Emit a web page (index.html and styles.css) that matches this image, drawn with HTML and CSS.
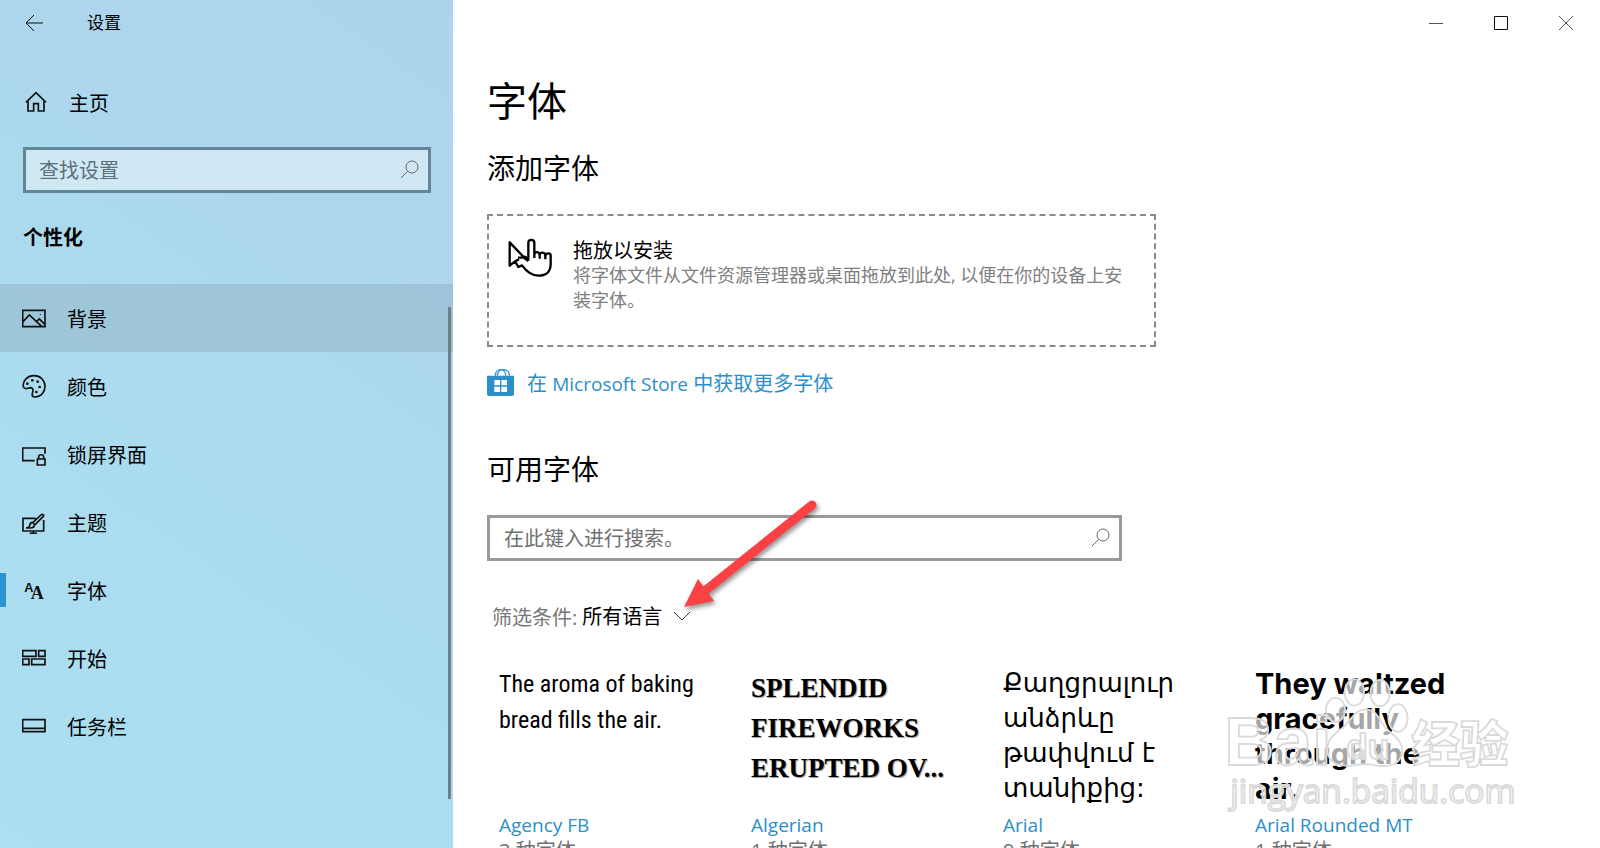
FILE: index.html
```html
<!DOCTYPE html>
<html lang="zh-CN">
<head>
<meta charset="utf-8">
<title>设置</title>
<link rel="stylesheet" href="styles.css">
</head>
<body>
<div class="window">
  <aside class="sidebar">
    <header class="titlebar">
      <button class="back" aria-label="返回">
        <svg width="18" height="18" viewBox="0 0 18 18"><path d="M9 1L1 9l8 8M1 9h17"/></svg>
      </button>
      <span class="app-name">设置</span>
    </header>
    <a class="home" href="#">
      <svg class="icon" viewBox="72 272 72 72"><path d="M78 309L108 280l30 29M84 304v31h17v-22h14v22h17v-31"/></svg>
      <span>主页</span>
    </a>
    <div class="search search-side">
      <input type="text" placeholder="查找设置" aria-label="查找设置">
      <svg class="glass" viewBox="0 0 20 20"><circle cx="12" cy="7" r="6"/><path d="M7.600 11.400L1 18"/></svg>
    </div>
    <h2 class="section">个性化</h2>
    <nav class="nav">
      <a class="item hover" href="#">
        <svg class="icon" viewBox="66 108 72 72"><path d="M68 121h67v49H68zM69 155l19-20 37 34M109 155l9-8 17 17"/><circle class="dot" cx="121" cy="133" r="2"/></svg>
        <span>背景</span>
      </a>
      <a class="item" href="#">
        <svg class="icon" viewBox="66 312 72 72"><path d="M70 350c-3-19 13-33 32-33 19 0 33 14 33 32 0 17-12 32-29 32-12 0-10-7-8-14 2-8 1-14-7-14-8 1-17 8-21-3z"/><g class="dot"><circle cx="82" cy="341" r="4"/><circle cx="97" cy="331" r="4"/><circle cx="113" cy="335" r="4"/><circle cx="119" cy="351" r="4"/><circle cx="109" cy="366" r="4"/></g></svg>
        <span>颜色</span>
      </a>
      <a class="item" href="#">
        <svg class="icon" viewBox="66 516 72 72"><path d="M104 572H68v-38h67v17M112 567h23v18h-23zM116 567v-6c0-9 15-9 15 0v6"/></svg>
        <span>锁屏界面</span>
      </a>
      <a class="item" href="#">
        <svg class="icon" viewBox="66 30 72 72"><path d="M107 55H69v38h62V60M100 93v7M89 100h22M78 84h12c8 0 13-3 13-8l27-27c3-4-2-8-6-5L99 67c-7-1-9 3-10 10-1 5-5 7-11 7zM98 67l7 8"/></svg>
        <span>主题</span>
      </a>
      <a class="item current" href="#" aria-current="page">
        <svg class="icon" viewBox="66 234 72 72"><text class="a-sans" x="73" y="275">A</text><text class="a-serif" x="92" y="297">A</text></svg>
        <span>字体</span>
      </a>
      <a class="item" href="#">
        <svg class="icon" viewBox="66 438 72 72"><path d="M68 452h40v17H68zM116 452h19v17h-19zM68 477h19v17H68zM95 477h40v17H95z"/></svg>
        <span>开始</span>
      </a>
      <a class="item" href="#">
        <svg class="icon" viewBox="66 642 72 72"><path d="M68 659h67v36H68zM68 685h67"/></svg>
        <span>任务栏</span>
      </a>
      <div class="scrollbar"></div>
    </nav>
  </aside>

  <main class="main">
    <div class="controls">
      <button aria-label="最小化"><svg width="14" height="14" viewBox="0 0 14 14"><path d="M0 7.500h14"/></svg></button>
      <button class="max" aria-label="最大化"><svg width="14" height="14" viewBox="0 0 14 14"><path d="M.5.5h13v13H.5z"/></svg></button>
      <button aria-label="关闭"><svg width="14" height="14" viewBox="0 0 14 14"><path d="M0 0l14 14M14 0L0 14"/></svg></button>
    </div>
    <div class="content">
      <h1>字体</h1>
      <h2 class="add-title">添加字体</h2>
      <section class="drop">
        <svg class="drop-icon" viewBox="112 532 138 120"><path d="M163 590L120 545v70l16-13 10 17 11-5c16 22 33 31 50 31 23 0 36-13 36-35v-25c0-9-14-9-16 0 0-11-16-13-17-1 0-12-15-13-16-2v-36c0-11-18-11-18 0v51c-5-9-14-12-18-4M137 602l11-6M227 585v11M210 584v10M194 580v12M145 591h17l14 10" /></svg>
        <div class="drop-text">
          <div class="drop-head">拖放以安装</div>
          <p>将字体文件从文件资源管理器或桌面拖放到此处, 以便在你的设备上安装字体。</p>
        </div>
      </section>
      <a class="store" href="#">
        <svg viewBox="51 924 81 81"><path class="bag" d="M51 944h81v55q0 6-6 6H57q-6 0-6-6z"/><path class="handle" d="M76 944c0-24 31-24 31 0M82 944c2-26 37-22 36 0"/><path class="panes" d="M73 957h17v16H73zM94 957h17v16H94zM73 977h17v16H73zM94 977h17v16H94z"/></svg>
        <span>在 <span class="latin">Microsoft Store</span> 中获取更多字体</span>
      </a>
      <h2 class="avail-title">可用字体</h2>
      <div class="search search-main">
        <input type="text" placeholder="在此键入进行搜索。" aria-label="搜索字体">
        <svg class="glass" viewBox="0 0 20 20"><circle cx="12" cy="7" r="6"/><path d="M7.600 11.400L1 18"/></svg>
      </div>
      <div class="filter">
        <label for="lang">筛选条件:</label>
        <select id="lang"><option>所有语言</option></select>
        <svg width="18" height="10" viewBox="0 0 18 10"><path d="M1 1l8 8 8-8"/></svg>
      </div>
      <div class="fonts">
        <article class="font">
          <div class="preview agency">The aroma of baking<br>bread fills the air.</div>
          <a class="latin" href="#">Agency FB</a>
          <div class="count">3 种字体</div>
        </article>
        <article class="font">
          <div class="preview algerian">SPLENDID<br>FIREWORKS<br>ERUPTED OV...</div>
          <a class="latin" href="#">Algerian</a>
          <div class="count">1 种字体</div>
        </article>
        <article class="font">
          <div class="preview arial">Քաղցրալուր<br>անձրևը<br>թափվում է<br>տանիքից:</div>
          <a class="latin" href="#">Arial</a>
          <div class="count">9 种字体</div>
        </article>
        <article class="font">
          <div class="preview rounded">They waltzed<br>gracefully<br>through the<br>air.</div>
          <a class="latin" href="#">Arial Rounded MT</a>
          <div class="count">1 种字体</div>
        </article>
      </div>
    </div>
  </main>

  <svg class="arrow" viewBox="676 492 150 125"><path class="shaft" d="M812 505L706 590"/><path class="head" d="M684 607L698 579 714 601z"/></svg>

  <svg class="watermark" viewBox="690 70 810 392">
    <g>
      <ellipse cx="1050" cy="124" rx="27" ry="37"/>
      <ellipse cx="1122" cy="126" rx="27" ry="37"/>
      <ellipse cx="997" cy="173" rx="27" ry="34"/>
      <ellipse cx="1172" cy="196" rx="27" ry="39"/>
      <path d="M1082 172c-34 0-42 34-66 52-24 17-46 36-42 67 6 39 46 43 84 36 20-4 34-2 52 2 40 7 70-4 74-38 2-34-28-47-50-71-14-19-22-48-52-48z"/>
    </g>
    <text class="wm-logo" x="686" y="328">Bai</text>
    <text class="wm-du" x="1026" y="312">du</text>
    <text class="wm-cn" x="1210" y="318">经验</text>
    <text class="wm-url" x="702" y="434">jingyan.baidu.com</text>
  </svg>
</div>
</body>
</html>
```
FILE: styles.css
```css
* { box-sizing: border-box; }

body {
  margin: 0;
  font-family: "Open Sans", "Noto Sans CJK SC", sans-serif;
  font-size: 20px;
  color: #000;
  background: #fff;
}

h1, h2, p { margin: 0; font-weight: 400; }
a { color: inherit; text-decoration: none; }
button { border: 0; padding: 0; background: none; }
svg { display: block; fill: none; stroke: #111; }
.latin { font-size: 19px; }

.window {
  position: relative;
  display: flex;
  height: 100vh;
  overflow: hidden;
}

/* Sidebar */
.sidebar {
  flex: 0 0 453px;
  display: flex;
  flex-direction: column;
  background: linear-gradient(215deg, #add4ed 0%, #add5ed 22%, #abdaee 45%, #acdff1 100%);
}
.titlebar {
  display: flex;
  align-items: center;
  gap: 44px;
  height: 46px;
  padding-left: 25px;
}
.app-name { font-size: 17px; line-height: 24px; }
.home {
  display: flex;
  align-items: center;
  gap: 21px;
  height: 40px;
  margin-top: 36px;
  padding-left: 24px;
}
.icon {
  width: 24px;
  height: 24px;
  stroke-width: 5;
}
.icon .dot { fill: #111; stroke: none; }
.icon text { fill: #111; stroke: none; }
.a-sans { font: 700 38px "Liberation Sans", sans-serif; }
.a-serif { font: 700 54px "Liberation Serif", serif; }

.search {
  display: flex;
  align-items: center;
  height: 46px;
  border: 3px solid #999;
}
.search input {
  flex: 1;
  min-width: 0;
  height: 40px;
  padding: 0 0 0 14px;
  border: 0;
  outline: 0;
  background: none;
  font: inherit;
}
.search input::placeholder { color: #707070; opacity: 1; }
.glass {
  width: 20px;
  height: 20px;
  margin-right: 8px;
  stroke: #666;
}
.search-side {
  margin: 25px 22px 0 23px;
  border-color: #648595;
  background: rgba(255, 255, 255, 0.42);
}
.search-side input { padding-left: 13px; }
.search-side input::placeholder { color: #5d717c; }

.section {
  margin: 31px 0 0 23px;
  font-size: 20px;
  font-weight: 700;
  line-height: 28px;
}
.nav {
  position: relative;
  flex: 1;
  margin-top: 32px;
}
.item {
  position: relative;
  display: flex;
  align-items: center;
  gap: 21px;
  height: 68px;
  padding-left: 22px;
}
.item.hover { background: rgba(130, 155, 170, 0.32); }
.item.current::before {
  content: "";
  position: absolute;
  left: 0;
  top: 17px;
  width: 6px;
  height: 34px;
  background: #2b93cf;
}
.scrollbar {
  position: absolute;
  top: 23px;
  right: 2px;
  width: 3px;
  height: 492px;
  background: #6f7f86;
}

/* Main pane */
.main {
  flex: 1;
  min-width: 0;
  display: flex;
  flex-direction: column;
}
.controls {
  flex: none;
  display: flex;
  justify-content: flex-end;
  height: 46px;
  padding-right: 2px;
}
.controls button {
  display: flex;
  align-items: center;
  justify-content: center;
  width: 65px;
}
.controls svg { stroke: #555; }
.controls .max svg { stroke: #111; }

.content { padding: 29px 34px 0; }
h1 { font-size: 40px; line-height: 52px; }
.add-title, .avail-title { font-size: 28px; line-height: 36px; }
.add-title { margin-top: 23px; }
.avail-title { margin-top: 54px; }

.drop {
  display: flex;
  gap: 20px;
  max-width: 669px;
  min-height: 133px;
  margin-top: 28px;
  padding: 22px 18px;
  border: 2px dashed #8a8a8a;
}
.drop-icon {
  flex: none;
  width: 46px;
  height: 40px;
  stroke: #000;
  stroke-width: 7;
  stroke-linejoin: round;
}
.drop-head { line-height: 25px; }
.drop-text p {
  font-size: 18px;
  line-height: 25px;
  color: #808080;
}

.store {
  display: flex;
  align-items: center;
  gap: 13px;
  height: 30px;
  margin-top: 20px;
  color: #2b8fcb;
}
.store svg { width: 27px; height: 27px; }
.bag { fill: #2b8fcb; stroke: none; }
.handle { stroke: #2b8fcb; stroke-width: 4; }
.panes { fill: #fff; stroke: none; }

.search-main { max-width: 635px; margin-top: 28px; }

.filter {
  display: flex;
  align-items: center;
  height: 30px;
  margin: 40px 0 0 5px;
}
.filter label { color: #777; }
.filter select {
  appearance: none;
  margin: 0 11px 0 5px;
  padding: 0;
  border: 0;
  background: none;
  color: #000;
  font: inherit;
}
.filter svg { stroke: #333; }

.fonts {
  display: grid;
  grid-template-columns: repeat(auto-fill, 240px);
  column-gap: 12px;
  margin-top: 35px;
  padding-left: 12px;
}
.font a {
  display: block;
  color: #2b8fcb;
  line-height: 28px;
}
.count { color: #707070; line-height: 24px; }
.preview { height: 145px; white-space: nowrap; }
.agency {
  font-family: "Roboto Condensed", "Liberation Sans Narrow", sans-serif;
  font-size: 24px;
  line-height: 36px;
}
.algerian {
  padding-top: 2px;
  font-family: "Liberation Serif", serif;
  font-size: 27px;
  font-weight: 700;
  line-height: 40px;
  text-shadow: 1px 1px 1px #999;
}
.arial {
  font-family: "DejaVu Sans", sans-serif;
  font-size: 26px;
  line-height: 35px;
}
.rounded {
  font-family: Inter, "Liberation Sans", sans-serif;
  font-size: 29px;
  font-weight: 700;
  line-height: 35px;
}

/* Overlays */
.arrow {
  position: absolute;
  left: 676px;
  top: 492px;
  width: 150px;
  height: 125px;
  filter: drop-shadow(2px 3px 2px rgba(0, 0, 0, 0.4));
  pointer-events: none;
}
.shaft { stroke: #fb4143; stroke-width: 9; stroke-linecap: round; }
.head { fill: #fb4143; stroke: none; }

.watermark {
  position: absolute;
  left: 1226px;
  top: 673px;
  width: 289px;
  height: 140px;
  overflow: visible;
  fill: rgba(255, 255, 255, 0.65);
  stroke: #dadada;
  stroke-width: 5;
  pointer-events: none;
}
.wm-logo { font: 700 192px "Liberation Sans", sans-serif; }
.wm-du { font: 700 100px "Liberation Sans", sans-serif; }
.wm-cn { font: 900 136px "Noto Sans CJK SC", sans-serif; }
.wm-url { font: 400 94px "Open Sans", sans-serif; }
```
